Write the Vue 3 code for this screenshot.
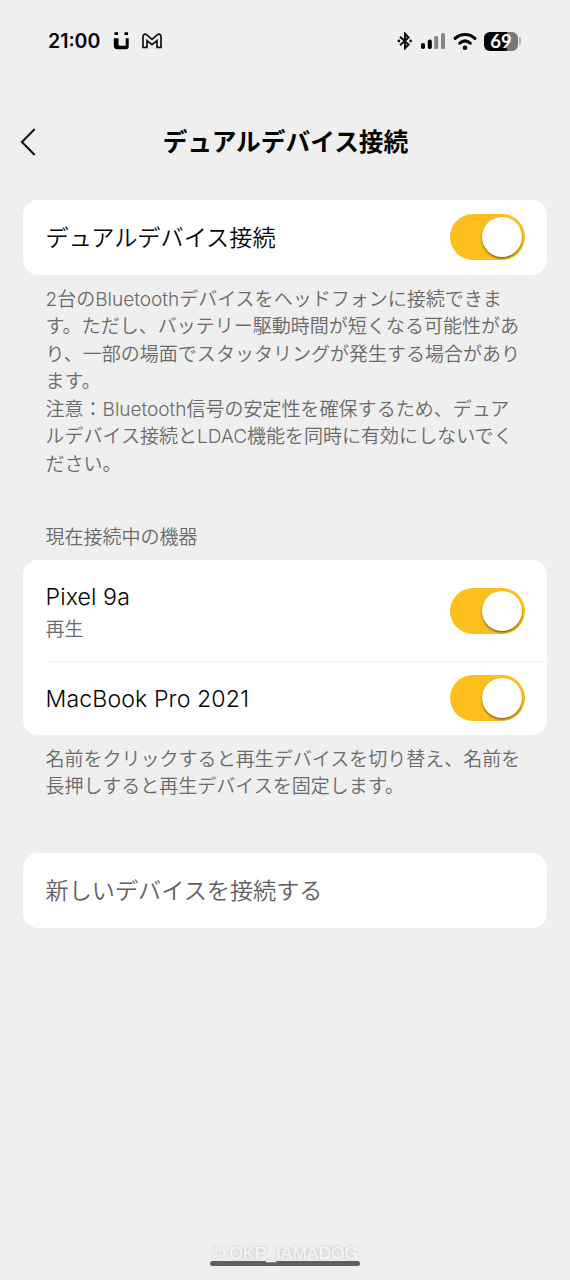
<template>
  <div class="screen">
    <header class="status-bar">
      <div class="status-left">
        <span class="clock">21:00</span>
        <svg class="icon-u" width="17" height="18" viewBox="0 0 17 18">
          <path d="M1.500 0.300h3.500v2.700H1.500zM11.500 0.300H15v2.700h-3.500z" />
          <path d="M0.800 6.300h4.700v6q0 1.500 1.500 1.500h5.700V6.300h3v8.200q0 2.700-2.700 2.700H4.200q-3.400 0-3.400-3.400z" />
        </svg>
        <svg class="icon-m" width="20" height="16" viewBox="0 0 20 16">
          <path d="M1 14.300V3.500C1 1 3.300.8 4.500 1.700L10 6.300l5.500-4.600C16.700.8 19 1 19 3.500v10.800h-4V7.500L10 11.600 5 7.500v6.800z" />
        </svg>
      </div>
      <div class="status-right">
        <svg class="icon-bt" width="16" height="18" viewBox="0 0 16 18">
          <path d="M3 4.700l8.600 7.800L8 16.300V1.700l3.600 3.800L3 13.300" />
          <circle cx="1.900" cy="9" r="1.400" />
          <circle cx="13.600" cy="9" r="1.400" />
        </svg>
        <svg class="icon-signal" width="26" height="18" viewBox="0 0 26 18">
          <rect x="1" y="11" width="4" height="6" rx="1.800" />
          <rect x="7.800" y="7.500" width="4" height="9.500" rx="1.800" />
          <rect class="dim" x="14.200" y="4" width="4" height="13" rx="1.500" />
          <rect class="dim" x="21" y="1" width="4" height="16" rx="1.500" />
        </svg>
        <svg class="icon-wifi" width="24" height="19" viewBox="0 0 24 19">
          <path d="M2.200 6.300c5.600-5.100 14-5.100 19.600 0" />
          <path d="M6.800 11.100c3.200-2.700 7.200-2.700 10.400 0" />
          <circle cx="12" cy="15.700" r="2.300" />
        </svg>
        <div class="battery">
          <div class="battery-body">69</div>
          <div class="battery-tip"></div>
        </div>
      </div>
    </header>

    <nav class="title-bar">
      <svg class="back" width="18" height="30" viewBox="0 0 18 30">
        <path d="M14.700 2L1.900 15l12.800 13" />
      </svg>
      <h1>デュアルデバイス接続</h1>
    </nav>

    <main>
      <section class="card">
        <div class="row">
          <span class="label">デュアルデバイス接続</span>
          <button class="toggle" :class="{ on: dualEnabled }" @click="dualEnabled = !dualEnabled"><i></i></button>
        </div>
      </section>
      <p class="note">
        2台のBluetoothデバイスをヘッドフォンに接続できま<br />す。ただし、バッテリー駆動時間が短くなる可能性があ<br />り、一部の場面でスタッタリングが発生する場合があり<br />ます。<br />注意：Bluetooth信号の安定性を確保するため、デュア<br />ルデバイス接続とLDAC機能を同時に有効にしないでく<br />ださい。
      </p>

      <h2>現在接続中の機器</h2>
      <section class="card">
        <div v-for="device in devices" :key="device.name" class="row device" :class="{ tall: device.status }">
          <div class="info">
            <span class="name">{{ device.name }}</span>
            <span v-if="device.status" class="state">{{ device.status }}</span>
          </div>
          <button class="toggle" :class="{ on: device.connected }" @click="device.connected = !device.connected"><i></i></button>
        </div>
      </section>
      <p class="note">
        名前をクリックすると再生デバイスを切り替え、名前を<br />長押しすると再生デバイスを固定します。
      </p>

      <section class="card connect">
        <div class="row">
          <span class="label">新しいデバイスを接続する</span>
        </div>
      </section>
    </main>

    <footer>
      <span class="credit">© OKP_IAMADOG</span>
      <div class="home-bar"></div>
    </footer>
  </div>
</template>

<script setup>
import { ref } from 'vue'

const dualEnabled = ref(true)
const devices = ref([
  { name: 'Pixel 9a', status: '再生', connected: true },
  { name: 'MacBook Pro 2021', status: '', connected: true }
])
</script>

<style>
body { background: #efefef; }
</style>

<style scoped>
* { box-sizing: border-box; }
.screen {
  width: 570px;
  height: 1280px;
  display: flex;
  flex-direction: column;
  background: #efefef;
  color: #050505;
  font-family: Inter, "Noto Sans CJK JP", sans-serif;
  overflow: hidden;
}

.status-bar {
  height: 82px;
  padding: 0 49px 0 48px;
  display: flex;
  align-items: center;
  justify-content: space-between;
}
.status-left, .status-right { display: flex; align-items: center; }
.clock { width: 53px; font-size: 19.5px; font-weight: 600; white-space: nowrap; }
.icon-u { margin-left: 12px; }
.icon-m { margin-left: 12px; fill: none; stroke: #111; stroke-width: 1.7; }
.icon-bt { fill: none; stroke: #111; stroke-width: 2; }
.icon-bt circle { fill: #111; stroke: none; }
.icon-signal { margin-left: 7px; }
.dim { fill: #858585; }
.icon-wifi { margin-left: 7px; fill: none; stroke: #050505; stroke-width: 3.2; stroke-linecap: round; }
.icon-wifi circle { fill: #050505; stroke: none; }
.battery { margin-left: 7px; display: flex; align-items: center; gap: 1px; }
.battery-body {
  width: 34px;
  height: 19px;
  border-radius: 6px;
  background: linear-gradient(90deg, #050505 69%, #777 69%);
  color: #fff;
  font-family: Lato, sans-serif;
  font-size: 18.5px;
  font-weight: 700;
  line-height: 19px;
  text-align: center;
}
.battery-tip { width: 2px; height: 8px; border-radius: 0 2px 2px 0; background: #b5b5b5; }

.title-bar {
  height: 118px;
  padding: 2px 19px 0 20px;
  display: grid;
  grid-template-columns: 18px 1fr 18px;
  align-items: center;
}
.back { fill: none; stroke: #111; stroke-width: 2; }
h1 { margin: 0; font-size: 24.7px; font-weight: 700; line-height: 36px; text-align: center; }

main { padding: 0 23px; flex: 1; }
.card { background: #fff; border-radius: 15px; }
.row {
  height: 74.5px;
  padding: 0 22px 0 22.5px;
  display: flex;
  align-items: center;
  justify-content: space-between;
}
.label, .name { font-size: 23.15px; font-weight: 350; line-height: 33px; }
.label { padding-top: 2px; }
.name { letter-spacing: 0.1px; }
.note {
  margin: 11px 0 0;
  padding: 0 22.5px;
  color: #6a6a6a;
  font-size: 19.02px;
  font-weight: 350;
  line-height: 27.5px;
  white-space: nowrap;
}
h2 {
  margin: 46px 0 9px;
  padding: 0 22.5px;
  color: #6a6a6a;
  font-size: 19px;
  font-weight: 350;
  line-height: 27px;
}
.device { height: 73px; }
.device.tall { height: 101.5px; position: relative; }
.device.tall::after {
  content: "";
  position: absolute;
  left: 23px;
  right: 0;
  bottom: 0;
  height: 1px;
  background: #f0f0f0;
}
.info { display: flex; flex-direction: column; padding-top: 2px; }
.tall .info { padding-top: 6px; }
.state { color: #6a6a6a; font-size: 19px; font-weight: 350; line-height: 32px; }
.connect { margin-top: 52.5px; }
.connect .label { color: #606060; }

.toggle {
  width: 75px;
  height: 46px;
  padding: 3px;
  display: flex;
  border: 0;
  border-radius: 23px;
  background: #ccc;
}
.toggle i {
  width: 40px;
  height: 40px;
  border-radius: 50%;
  background: #fff;
  box-shadow: 0 1.5px 2px rgba(0, 0, 0, 0.5);
}
.toggle.on { justify-content: flex-end; background: #fcbf1c; }

footer { height: 38px; display: flex; flex-direction: column; align-items: center; }
.credit {
  height: 19px;
  color: #f8f8f8;
  font-family: "Liberation Sans", sans-serif;
  font-size: 17.4px;
  line-height: 22px;
  position: relative;
  z-index: 1;
  text-shadow: 0 0 4px rgba(0, 0, 0, 0.22);
}
.home-bar { width: 150px; height: 5px; border-radius: 3px; background: #606060; }
</style>
